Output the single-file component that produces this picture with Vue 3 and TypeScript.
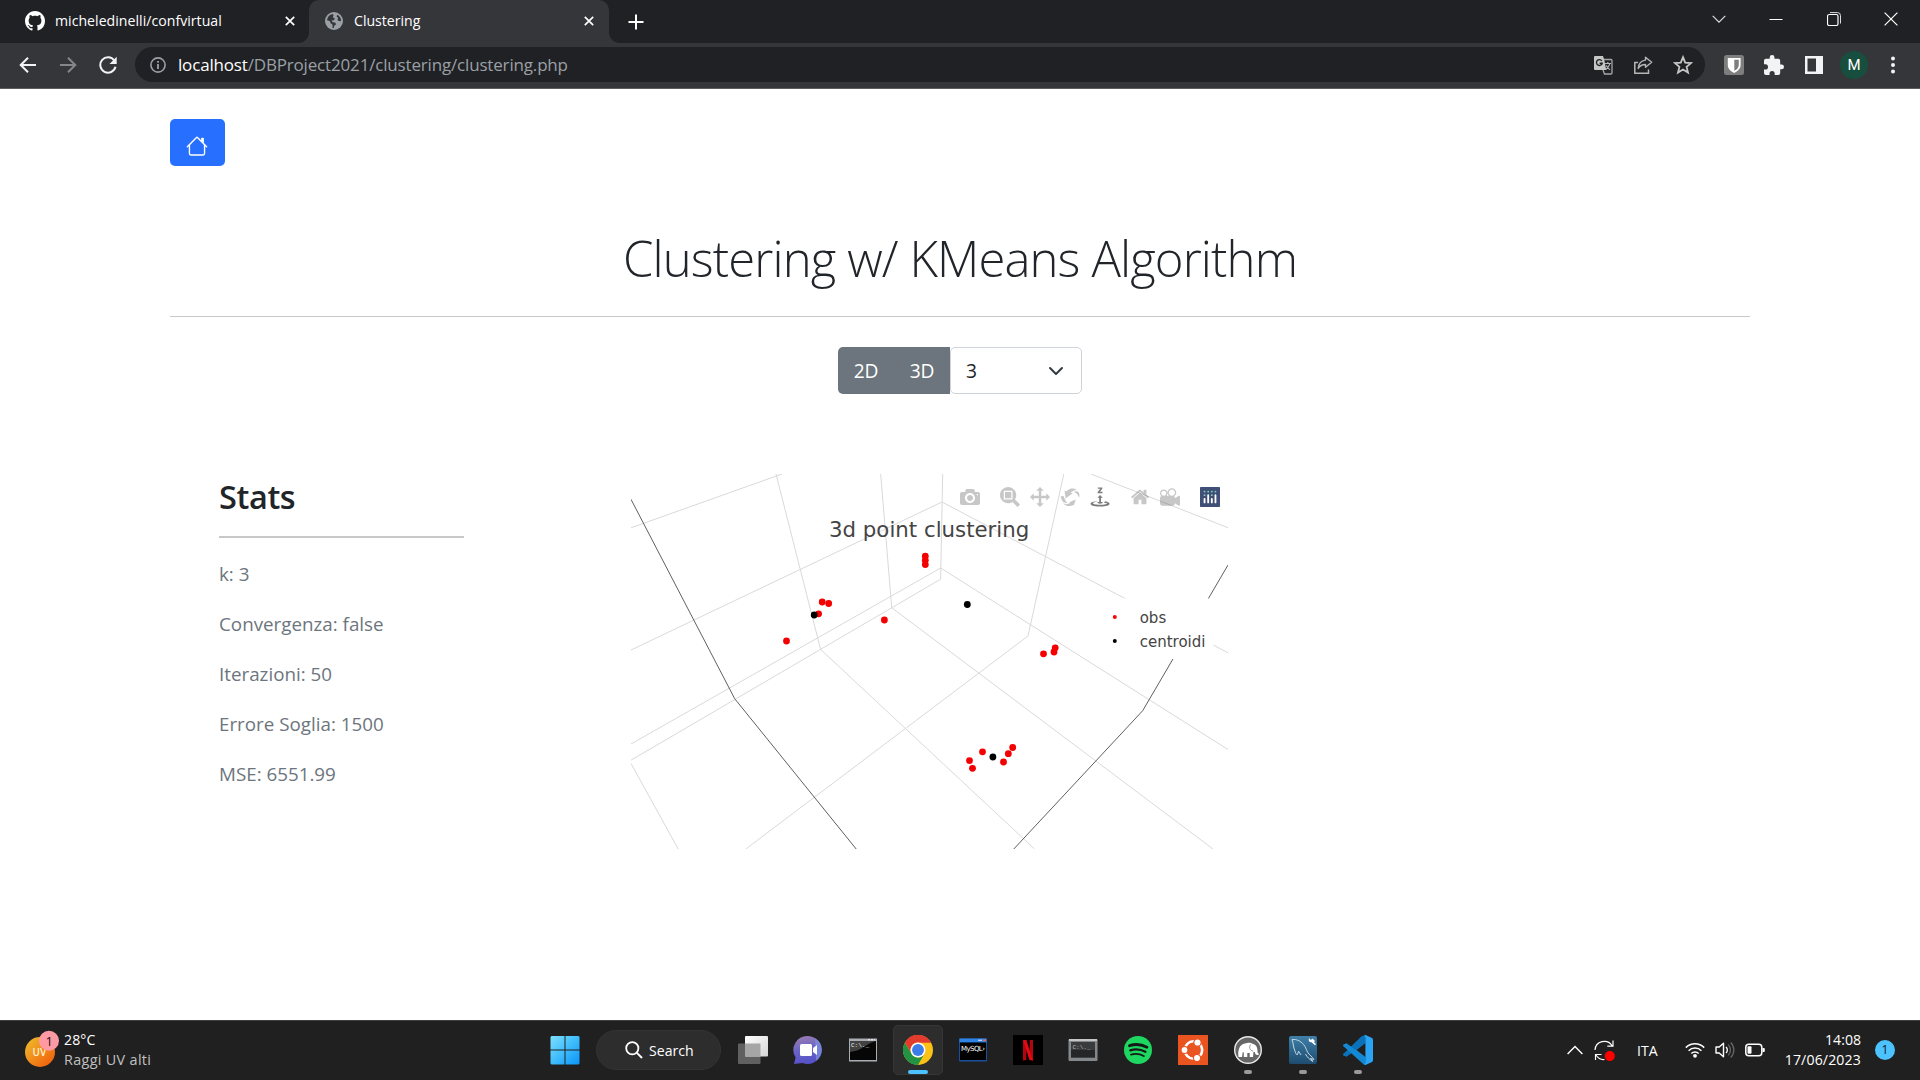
<script setup lang="ts">
interface Segment {
  x1: number
  y1: number
  x2: number
  y2: number
}

const stats: { label: string; value: string }[] = [
  { label: 'k', value: '3' },
  { label: 'Convergenza', value: 'false' },
  { label: 'Iterazioni', value: '50' },
  { label: 'Errore Soglia', value: '1500' },
  { label: 'MSE', value: '6551.99' },
]

const seg = (x1: number, y1: number, x2: number, y2: number): Segment => ({ x1, y1, x2, y2 })

const grid: Segment[] = [
  seg(631, 527.8, 782, 474),
  seg(631, 650, 942, 502),
  seg(631, 744, 940.7, 568),
  seg(631, 760.2, 940.6, 579.2),
  seg(776, 474, 820.6, 649.4),
  seg(880.7, 474, 891.7, 607.7),
  seg(891.7, 607.7, 1213, 849),
  seg(820.6, 649.4, 1034.6, 849),
  seg(631, 763.5, 678.2, 849),
  seg(745.8, 849, 1028, 636),
  seg(1028, 636, 1063.8, 474),
  seg(942.7, 474, 940.6, 579.2),
  seg(942, 502, 1228, 652.8),
  seg(940.7, 568, 1228, 749.5),
  seg(1091, 474, 1228, 527.7),
]

const axes: Segment[] = [
  seg(631, 499.3, 734.7, 698.7),
  seg(734.7, 698.7, 856.2, 849),
  seg(1228, 565, 1142.7, 710.7),
  seg(1142.7, 710.7, 1013.8, 849),
]

const observations: [number, number][] = [
  [925.3, 556.2], [925.3, 560.3], [925.3, 564.6],
  [822.2, 602], [828.7, 603.5], [818.6, 613.8],
  [884.4, 620], [786.5, 641],
  [1055.2, 647.8], [1054, 652], [1043.5, 653.8],
  [1012.7, 747.5], [1008.3, 753.7], [1003.5, 762],
  [982.5, 751.8], [969.5, 760.7], [972.5, 768.3],
]

const centroids: [number, number][] = [
  [967.3, 604.5], [814.2, 615], [992.9, 757],
]
</script>

<template>
  <div class="screen">
    <header class="tabs">
      <div class="tab">
        <svg class="fav" viewBox="0 0 16 16" width="20" height="20"><path fill="#fff" d="M8 0C3.58 0 0 3.58 0 8c0 3.54 2.29 6.53 5.47 7.59.4.07.55-.17.55-.38 0-.19-.01-.82-.01-1.49-2.01.37-2.53-.49-2.69-.94-.09-.23-.48-.94-.82-1.13-.28-.15-.68-.52-.01-.53.63-.01 1.08.58 1.23.82.72 1.21 1.87.87 2.33.66.07-.52.28-.87.51-1.07-1.78-.2-3.64-.89-3.64-3.95 0-.87.31-1.59.82-2.15-.08-.2-.36-1.02.08-2.12 0 0 .67-.21 2.2.82.64-.18 1.32-.27 2-.27s1.36.09 2 .27c1.53-1.04 2.2-.82 2.2-.82.44 1.1.16 1.92.08 2.12.51.56.82 1.27.82 2.15 0 3.07-1.87 3.75-3.65 3.95.29.25.54.73.54 1.48 0 1.07-.01 1.93-.01 2.2 0 .21.15.46.55.38A8.01 8.01 0 0 0 16 8c0-4.42-3.58-8-8-8z" /></svg>
        <span class="tab-title t1">micheledinelli/confvirtual</span>
        <svg class="x" viewBox="0 0 10 10" width="10" height="10"><path d="M.8.8l8.4 8.4M9.2.8L.8 9.2" stroke="#fff" stroke-width="1.7" /></svg>
      </div>
      <div class="tab active">
        <svg class="fav" viewBox="0 0 18 18" width="18" height="18"><circle cx="9" cy="9" r="9" fill="#9aa0a6" /><path fill="#35363a" d="M2 8.3C2.4 5 4.500 2.700 7.600 2.100L8.600 3.300 7.800 5.500 9.800 6.300 9 8.200 6.500 8.500 7.600 10.200 10 10.600 11.200 12.200 9.400 13.600 8.700 16 7.500 15.900 7.600 12.700 5.700 11.300 4.700 8.900zM12.200 2.800C14.600 4 16 6.100 16.100 8.800L14.300 9.300 12.400 8 13.200 6 11.600 4.600z" /></svg>
        <span class="tab-title t2">Clustering</span>
        <svg class="x" viewBox="0 0 10 10" width="10" height="10"><path d="M.8.8l8.4 8.4M9.2.8L.8 9.2" stroke="#fff" stroke-width="1.7" /></svg>
      </div>
      <svg class="plus" viewBox="0 0 16 16" width="16" height="16"><path d="M8 .5v15M.5 8h15" stroke="#fff" stroke-width="2" /></svg>
      <div class="win">
        <svg viewBox="0 0 14 14" width="14" height="14"><path d="M.7 3.800L7 10.200 13.300 3.800" fill="none" stroke="#ddd" stroke-width="1.2" /></svg>
        <svg viewBox="0 0 14 14" width="14" height="14"><path d="M.5 7.500h13" stroke="#fff" /></svg>
        <svg viewBox="0 0 14 14" width="14" height="14"><rect x=".5" y="2.500" width="10.500" height="11" rx="1.800" fill="none" stroke="#fff" stroke-width="1.200" /><path d="M3 .6h7.500a3 3 0 0 1 3 3V11.500" fill="none" stroke="#ddd" /></svg>
        <svg viewBox="0 0 14 14" width="14" height="14"><path d="M.6.6l12.800 12.800M13.400.6L.6 13.400" stroke="#fff" stroke-width="1.200" /></svg>
      </div>
    </header>

    <div class="toolbar">
      <svg class="back" viewBox="0 0 18 18" width="18" height="18"><path d="M17 9H2M9 1.700L1.700 9 9 16.300" fill="none" stroke="#f1f3f4" stroke-width="2" /></svg>
      <svg class="fwd" viewBox="0 0 18 18" width="18" height="18"><path d="M1 9h15M9 1.700L16.300 9 9 16.300" fill="none" stroke="#85868a" stroke-width="2" /></svg>
      <svg class="reload" viewBox="0 0 18 18" width="18" height="18"><path d="M15.300 4.500A7.700 7.700 0 1 0 16.500 10.800" fill="none" stroke="#f1f3f4" stroke-width="2" /><path d="M17.700 .8v7.200h-7.200z" fill="#f1f3f4" /></svg>
      <div class="omnibox">
        <svg viewBox="0 0 16 16" width="16" height="16"><circle cx="8" cy="8" r="7.100" fill="none" stroke="#9aa0a6" stroke-width="1.600" /><path d="M8 7v5M8 4v1.700" stroke="#9aa0a6" stroke-width="1.800" /></svg>
        <span class="url"><b>localhost</b>/DBProject2021/clustering/clustering.php</span>
        <div class="acts">
          <svg viewBox="0 0 20 20" width="20" height="20"><path d="M2 1h8l1.200 3.500 2 10.500H2a1 1 0 0 1-1-1V2a1 1 0 0 1 1-1z" fill="#c4c7c5" /><path d="M11 4.500h7a1 1 0 0 1 1 1V18a1 1 0 0 1-1 1h-6.500L10 15" fill="none" stroke="#a5a7a7" stroke-width="1.300" /><path d="M8.800 5.900A2.900 2.900 0 1 0 9.200 8.300H6.600" fill="none" stroke="#202124" stroke-width="1.400" /><path d="M12 8.500h6M14.800 7v1.500M16.800 8.500c-.5 3-2 4.500-4 6M13.300 10.500c1 2 2.200 3.300 3.700 4.300" fill="none" stroke="#b5b7b7" stroke-width="1.200" /></svg>
          <svg viewBox="0 0 20 20" width="20" height="20"><path d="M5 7.500H1.800V18.200H15.500V14.500" fill="none" stroke="#b5b7b7" stroke-width="1.500" /><path d="M12.500 2.200L18.700 7.300 12.500 12.300V9.500C9 9.500 6.800 10.800 5.200 13.500 5.500 9 8 5.700 12.500 5.100z" fill="none" stroke="#b5b7b7" stroke-width="1.400" stroke-linejoin="round" /></svg>
          <svg viewBox="0 0 20 20" width="20" height="20"><path d="M10 2.200L12.200 7.600 18 8.100 13.600 11.900 15 17.600 10 14.500 5 17.600 6.400 11.900 2 8.100 7.800 7.600z" fill="none" stroke="#c4c7c5" stroke-width="1.800" /></svg>
        </div>
      </div>
      <div class="exts">
        <svg viewBox="0 0 20 20" width="20" height="20"><rect width="20" height="20" rx="2.500" fill="#7e7e7e" /><path d="M3.800 3h12.800v7c0 4-3 6.300-6.400 8-3.400-1.700-6.400-4-6.400-8z" fill="#fff" /><path d="M10.300 4.800h4.500V10c0 2.700-2 4.400-4.500 5.800z" fill="#7e7e7e" /></svg>
        <svg viewBox="2 1 21 21" width="20" height="20"><path d="M20.500 11H19V7a2 2 0 0 0-2-2h-4V3.500a2.500 2.500 0 0 0-5 0V5H4a2 2 0 0 0-2 2v3.800h1.500a2.700 2.700 0 0 1 0 5.400H2V20a2 2 0 0 0 2 2h3.800v-1.500a2.700 2.700 0 0 1 5.400 0V22H17a2 2 0 0 0 2-2v-4h1.500a2.500 2.500 0 0 0 0-5z" fill="#f1f3f4" /></svg>
        <svg viewBox="0 0 20 20" width="20" height="20"><path fill-rule="evenodd" d="M1 1h18v18H1zM3.500 3.500v13h8.500v-13z" fill="#f1f3f4" /></svg>
        <span class="avatar">M</span>
        <svg class="dots" viewBox="0 0 4 18" width="4" height="18"><circle cx="2" cy="2.500" r="2" fill="#f1f3f4" /><circle cx="2" cy="9" r="2" fill="#f1f3f4" /><circle cx="2" cy="15.500" r="2" fill="#f1f3f4" /></svg>
      </div>
    </div>

    <main class="page">
      <button class="home">
        <svg viewBox="0 0 16 16" width="22" height="22" fill="#fff"><path fill-rule="evenodd" d="M2 13.500V7h1v6.500a.5.5 0 0 0 .5.5h9a.5.5 0 0 0 .5-.5V7h1v6.500a1.500 1.500 0 0 1-1.500 1.500h-9A1.500 1.500 0 0 1 2 13.500zm11-11V6l-2-2V2.500a.5.5 0 0 1 .5-.5h1a.5.5 0 0 1 .5.5z" /><path fill-rule="evenodd" d="M7.293 1.500a1 1 0 0 1 1.414 0l6.647 6.646a.5.5 0 0 1-.708.708L8 2.207 1.354 8.854a.5.5 0 1 1-.708-.708L7.293 1.500z" /></svg>
      </button>
      <h1>Clustering w/ KMeans Algorithm</h1>
      <hr />
      <div class="controls">
        <button class="mode">2D</button>
        <button class="mode">3D</button>
        <div class="select">
          <span>3</span>
          <svg viewBox="0 0 16 16" width="16" height="16"><path d="M2 5l6 6 6-6" fill="none" stroke="#343a40" stroke-width="2" stroke-linecap="round" stroke-linejoin="round" /></svg>
        </div>
      </div>

      <div class="row">
        <section class="stats">
          <h2>Stats</h2>
          <div class="rule"></div>
          <p v-for="s in stats" :key="s.label">{{ s.label }}: {{ s.value }}</p>
        </section>

        <svg class="plot" viewBox="631 474 597 375" width="597" height="375">
          <line v-for="(l, i) in grid" :key="'g' + i" v-bind="l" stroke="#d9d9d9" stroke-width="1" />
          <line v-for="(l, i) in axes" :key="'a' + i" v-bind="l" stroke="#606060" stroke-width="1" />
          <circle v-for="(p, i) in observations" :key="'o' + i" :cx="p[0]" :cy="p[1]" r="3.4" fill="#f40000" />
          <circle v-for="(p, i) in centroids" :key="'c' + i" :cx="p[0]" :cy="p[1]" r="3.4" fill="#000" />
          <rect x="1101" y="598.500" width="112.500" height="60.500" fill="#fff" />
          <circle cx="1114.800" cy="617" r="2" fill="#f00" />
          <circle cx="1114.800" cy="641" r="2" fill="#000" />
          <text x="1139.700" y="622.500" class="legend">obs</text>
          <text x="1139.700" y="646.500" class="legend">centroidi</text>
          <text x="829" y="537" class="title">3d point clustering</text>
          <g fill="#444" fill-opacity=".3">
            <svg x="960" y="487" width="20" height="20" viewBox="0 0 1000 1000"><path transform="matrix(1 0 0 -1 0 850)" d="m500 450c-83 0-150-67-150-150 0-83 67-150 150-150 83 0 150 67 150 150 0 83-67 150-150 150z m400 150h-120c-16 0-34 13-39 29l-31 93c-6 15-23 28-40 28h-340c-16 0-34-13-39-28l-31-94c-6-15-23-28-40-28h-120c-55 0-100-45-100-100v-450c0-55 45-100 100-100h800c55 0 100 45 100 100v450c0 55-45 100-100 100z m-400-550c-138 0-250 112-250 250 0 138 112 250 250 250 138 0 250-112 250-250 0-138-112-250-250-250z m365 380c-19 0-35 16-35 35 0 19 16 35 35 35 19 0 35-16 35-35 0-19-16-35-35-35z" /></svg>
            <svg x="1000" y="487" width="20" height="20" viewBox="0 0 1000 1000"><path transform="matrix(1 0 0 -1 0 850)" d="m1000-25l-250 251c40 63 63 138 63 218 0 224-182 406-407 406-224 0-406-182-406-406s183-406 407-406c80 0 155 22 218 62l250-250 125 125z m-812 250l0 438 437 0 0-438-437 0z m62 375l313 0 0-312-313 0 0 312z" /></svg>
            <svg x="1030" y="487" width="20" height="20" viewBox="0 0 1000 1000"><path transform="matrix(1 0 0 -1 0 850)" d="m1000 350l-187 188 0-125-250 0 0 250 125 0-188 187-187-187 125 0 0-250-250 0 0 125-188-188 186-187 0 125 252 0 0-250-125 0 187-188 188 188-125 0 0 250 250 0 0-126 187 188z" /></svg>
            <svg x="1060" y="487" width="20" height="20" viewBox="0 0 1000 1000"><path transform="matrix(1 0 0 -1 0 850)" d="m922 660c-5 4-9 7-14 11-359 263-580-31-580-31l-102 28 58-400c0 1 1 1 2 2 118 108 351 249 351 249s-62 27-100 42c88 83 222 183 347 122 16-8 30-17 44-27-2 1-4 2-6 4z m36-329c0 0 64 229-88 296-62 27-124 14-175-11 157-78 225-208 249-266 8-19 11-31 11-31 2 5 6 15 11 32-5-13-8-20-8-20z m-775-239c70-31 117-50 198-32-121 80-199 346-199 346l-96-15-58-12c0 0 55-226 155-287z m603 133l-317-139c0 0 4-4 19-14 7-5 24-15 24-15s-177-147-389 4c235-287 536-112 536-112l31-22 100 299-4-1z m-298-153c6-4 14-9 24-15 0 0-17 10-24 15z" /></svg>
            <svg x="1090" y="487" width="20" height="20" viewBox="0 0 1000 1000" fill-opacity=".7"><path transform="matrix(1 0 0 -1 0 850)" d="m833 5l-17 108v41l-130-65 130-66c0 0 0 38 0 39 0-1 36-14 39-25 4-15-6-22-16-30-15-12-39-16-56-20-90-22-187-23-279-23-261 0-341 34-353 59 3 60 228 110 228 110-140-8-351-35-351-116 0-120 293-142 474-142 155 0 477 22 477 142 0 50-74 79-163 96z m-374 94c-58-5-99-21-99-40 0-24 65-43 144-43 79 0 143 19 143 43 0 19-42 34-98 40v216h87l-132 135-133-135h88v-216z m167 515h-136v1c16 16 31 34 46 52l84 109v54h-230v-71h124v-1c-16-17-28-32-44-51l-89-114v-51h245v72z" /></svg>
            <svg x="1130.500" y="487" width="19" height="20" viewBox="0 0 928.6 1000"><path transform="matrix(1 0 0 -1 0 850)" d="m786 296v-267q0-15-11-26t-25-10h-214v214h-143v-214h-214q-15 0-25 10t-11 26v267q0 1 0 2t0 2l321 264 321-264q1-1 1-4z m124 39l-34-41q-5-5-12-6h-2q-7 0-12 3l-386 322-386-322q-7-4-13-4-7 2-12 7l-35 41q-4 5-3 13t6 12l401 334q18 15 42 15t43-15l136-114v109q0 8 5 13t13 5h107q8 0 13-5t5-13v-227l122-102q5-5 6-12t-4-13z" /></svg>
            <svg x="1160" y="487" width="20" height="20" viewBox="0 0 1000 1000"><path transform="matrix(1 0 0 -1 0 850)" d="m938 413l-188-125c0 37-17 71-44 94 64 38 107 107 107 187 0 121-98 219-219 219-121 0-219-98-219-219 0-61 25-117 66-156h-115c30 33 49 76 49 125 0 103-84 187-187 187s-188-84-188-187c0-57 26-107 65-141-38-22-65-62-65-109v-250c0-70 56-126 125-126h500c69 0 125 56 125 126l188-126c34 0 62 28 62 63v375c0 35-28 63-62 63z m-750 0c-69 0-125 56-125 125s56 125 125 125 125-56 125-125-56-125-125-125z m406-1c-87 0-157 70-157 157 0 86 70 156 157 156s156-70 156-156-70-157-156-157z" /></svg>
          </g>
          <svg x="1200" y="487" width="20" height="20" viewBox="0 0 132 132">
            <rect width="132" height="132" rx="5" fill="#3f4f75" />
            <g fill="#80cfbe"><circle cx="30" cy="30" r="6" /><circle cx="54" cy="30" r="6" /><circle cx="78" cy="30" r="6" /><circle cx="102" cy="30" r="6" /><circle cx="30" cy="54" r="6" /><circle cx="78" cy="54" r="6" /></g>
            <path d="M30 78v24M78 78v24M54 54v48M102 54v48" stroke="#fff" stroke-width="12" stroke-linecap="round" />
          </svg>
        </svg>
      </div>
    </main>

    <footer class="taskbar">
      <div class="weather">
        <svg viewBox="0 0 36 40" width="36" height="40">
          <defs><linearGradient id="uv" x1="0" y1="0" x2="1" y2="1"><stop offset="0" stop-color="#f0c02c" /><stop offset="1" stop-color="#f0560a" /></linearGradient></defs>
          <circle cx="15" cy="22" r="15" fill="url(#uv)" />
          <text x="7.500" y="25.500" class="uv">UV</text>
          <circle cx="24" cy="10.700" r="10" fill="#ff99a4" />
          <text x="20.500" y="16" class="one">1</text>
        </svg>
        <div class="wtext"><span class="temp">28°C</span><span class="desc">Raggi UV alti</span></div>
      </div>
      <div class="cell">
        <svg viewBox="0 0 30 30" width="30" height="30">
          <defs><linearGradient id="ws" x1="0" y1="0" x2="1" y2="1" gradientUnits="objectBoundingBox"><stop offset="0" stop-color="#7fdfff" /><stop offset=".5" stop-color="#3fbdfb" /><stop offset="1" stop-color="#0a94f8" /></linearGradient></defs>
          <path d="M1.500 1H14.500V14.500H.5V2zM15.500 1H28.500L29.500 2V14.500H15.500zM.5 15.500H14.500V29.500H1.500L.5 28.500zM15.500 15.500H29.500V28.500L28.500 29.500H15.500z" fill="url(#ws)" />
        </svg>
      </div>
      <div class="search">
        <svg viewBox="0 0 18 18" width="18" height="18"><circle cx="7.300" cy="7.300" r="6.100" fill="none" stroke="#fff" stroke-width="1.800" /><path d="M11.700 11.700L17 17" stroke="#fff" stroke-width="1.900" /></svg>
        <span>Search</span>
      </div>
      <div class="apps">
        <div class="cell">
          <svg viewBox="0 0 30 30" width="30" height="30"><defs><linearGradient id="tv" x2="1" y2="1"><stop offset="0" stop-color="#fff" /><stop offset="1" stop-color="#d5d5d5" /></linearGradient></defs><rect x="0" y="8.500" width="22.500" height="20.500" rx="1" fill="#606060" /><rect x="7" y="1" width="23" height="20.500" rx="1" fill="url(#tv)" /><path d="M7 8.500h15.500v13H7z" fill="#a6a6a6" /></svg>
        </div>
        <div class="cell">
          <svg viewBox="0 0 30 30" width="30" height="30"><defs><linearGradient id="ch" x1=".2" y1="0" x2=".4" y2="1"><stop offset="0" stop-color="#9d7cb3" /><stop offset=".5" stop-color="#6a64c4" /><stop offset="1" stop-color="#5551c8" /></linearGradient></defs><path d="M15 1a14 14 0 1 1-5.500 27L1 29l1.600-6.500A14 14 0 0 1 15 1z" fill="url(#ch)" /><path d="M22 3a14 14 0 0 1 7 12 14 14 0 0 1-6 11z" fill="#7f93e6" opacity=".65" /><rect x="7" y="9" width="12" height="12" rx="1.500" fill="#fff" /><path d="M20 13l4-3v10l-4-3z" fill="#fff" /></svg>
        </div>
        <div class="cell">
          <svg viewBox="0 0 30 30" width="30" height="30"><rect x="1" y="3.500" width="28" height="23" fill="#aaaeb2" /><rect x="2" y="6" width="26" height="19" fill="#060606" /><path d="M2 6h26C20 8 14 14 9 15.500L2 17z" fill="#424242" /><path d="M20 4.800h7" stroke="#fff" stroke-dasharray="2 1" /><text x="3" y="12" class="prompt">C:\._</text></svg>
        </div>
        <div class="cell on">
          <svg viewBox="0 0 48 48" width="30" height="30"><circle cx="24" cy="24" r="24" fill="#fbc116" /><path d="M3.200 12A24 24 0 0 1 44.800 12H24z" fill="#e33b2e" /><path d="M3.200 12A24 24 0 0 0 24 48L34.400 30A12 12 0 0 1 13.600 30z" fill="#229342" /><path d="M3.200 12A24 24 0 0 1 24 0 24 24 0 0 1 44.800 12H24A12 12 0 0 0 13.600 30z" fill="#e33b2e" /><circle cx="24" cy="24" r="12" fill="#fff" /><circle cx="24" cy="24" r="9.500" fill="#3b7de9" /></svg>
          <i class="wide"></i>
        </div>
        <div class="cell">
          <svg viewBox="0 0 30 30" width="30" height="30"><rect x="1" y="3.500" width="28" height="23" rx="1" fill="#1b4f9d" /><rect x="1.500" y="3.500" width="27" height="4" fill="#2f83e6" /><path d="M20 5.300h4" stroke="#bcd8ff" stroke-width="1.300" /><path d="M25 5.300h3" stroke="#e06a58" stroke-width="1.800" /><rect x="2" y="7.500" width="26" height="17.500" fill="#000" /><text x="3" y="15.500" class="mysql" textLength="24">MySQL›</text></svg>
        </div>
        <div class="cell">
          <svg viewBox="0 0 30 30" width="30" height="30"><rect width="30" height="30" fill="#000" /><path d="M10 5h3.300v20l-3.300.5zM16.700 5H20v20.500l-3.300-.5z" fill="#b1060f" /><path d="M10 5h3.300L20 25.500l-3.500-.5z" fill="#e50914" /></svg>
        </div>
        <div class="cell">
          <svg viewBox="0 0 30 30" width="30" height="30"><rect x=".5" y="4" width="29" height="22" rx="1" fill="#85888a" /><rect x="1" y="4" width="28" height="2" fill="#c3c5c6" /><rect x="3" y="7" width="24" height="15.500" fill="#3a3b3c" /><path d="M3 15h24v7.500H3z" fill="#252627" /><text x="4.500" y="13.500" class="prompt dim">C:\._</text></svg>
        </div>
        <div class="cell">
          <svg viewBox="0 0 30 30" width="30" height="30"><circle cx="15" cy="15" r="14" fill="#1ed760" /><g fill="none" stroke="#161a17" stroke-linecap="round"><path d="M6.500 10.700C12 8.900 19 9.500 24 12.200" stroke-width="2.800" /><path d="M7.300 15.300C12 13.800 18 14.300 22.400 16.800" stroke-width="2.300" /><path d="M8 19.600C12.300 18.400 16.900 18.800 20.800 21" stroke-width="1.900" /></g></svg>
        </div>
        <div class="cell">
          <svg viewBox="0 0 30 30" width="30" height="30"><rect width="30" height="30" fill="#e95420" /><circle cx="15.500" cy="15" r="8.700" fill="none" stroke="#fff" stroke-width="2.600" /><g fill="#fff" stroke="#e95420" stroke-width="1.200"><circle cx="6.500" cy="15" r="3.500" /><circle cx="19.500" cy="7.500" r="3.700" /><circle cx="19" cy="23" r="3.600" /></g></svg>
        </div>
        <div class="cell">
          <svg viewBox="0 0 30 30" width="30" height="30"><circle cx="15" cy="15" r="13.300" fill="#666" stroke="#e8e8e8" stroke-width="1.400" /><path d="M5.500 22C4.500 15 6.500 9.500 12 8.500c2.500-1.200 6-1 8 .5 3.300.7 4.500 3.500 4.500 7 0 2 .6 2.700 1.600 2.500-.5 2.500-4.300 2-4.300-1.500l-1.300-.3-.5 5.300h-3.300v-4h-2.400v4h-3.500v-4.500l-1-.5-.8 5z" fill="#fff" /><path d="M17.500 9.500c-1.700 3-.7 6 2.500 6.500" fill="none" stroke="#888" stroke-width=".9" /></svg>
          <i></i>
        </div>
        <div class="cell">
          <svg viewBox="0 0 30 30" width="30" height="30"><defs><linearGradient id="wb" x2="0" y2="1"><stop offset="0" stop-color="#3f7fa8" /><stop offset="1" stop-color="#1e4c70" /></linearGradient></defs><rect x="1" y="1" width="28" height="28" rx="2" fill="url(#wb)" /><path d="M4 4.500C9 4 14 6.500 17 11.500c2 4 2.500 7 6 9.500l3 3.500-3.500-1 2.500 3c-3.500-2-6-4.500-7.500-7.500M4 4.500C5.500 8 5 12 7 16c.5 2.500 1.500 4 2.500 3.500l1-3.300L13 20" fill="none" stroke="#d5e2ea" stroke-width=".9" /><path d="M21 3l1.800 2 1.700-1.500L27 6l-1 1.300 2 1.700-1 1.300-3.500-3c-2 .3-3.300-1.500-2.500-4.300z" fill="#fff" /></svg>
          <i></i>
        </div>
        <div class="cell">
          <svg viewBox="0 0 100 100" width="30" height="30"><path d="M75 0L30 42 12 28 3 31 0 36 18 50 0 64 3 69 12 72 30 58 75 100z" fill="#0f83cd" /><path d="M30 58L12 72 3 69 0 64 62 4 75 0V27z" fill="#0a72bb" /><path d="M0 36L3 31 12 28 75 73V100L69 98z" fill="#1389d6" /><path d="M75 27L45 50 75 73z" fill="#202020" /><path d="M75 0L97 10 100 15V85L97 90 75 100 71 98 75 92V8L71 2z" fill="#2aa4f4" /></svg>
          <i></i>
        </div>
      </div>
      <div class="tray">
        <svg class="chev" viewBox="0 0 16 10" width="16" height="10"><path d="M.6 9L8 1.500 15.400 9" fill="none" stroke="#fff" stroke-width="1.400" /></svg>
        <svg class="sync" viewBox="0 0 21 21" width="21" height="21"><path d="M1 10A9.300 9.300 0 0 1 18 5.500M19 .5V6.200H13.300M1.500 20V14.500H7.500M2 15C4 18 7 20 10.500 19.500" fill="none" stroke="#fff" stroke-width="1.200" /><circle cx="15.800" cy="16" r="5.100" fill="#f00" /></svg>
        <span class="lang">ITA</span>
        <svg class="wifi" viewBox="0 0 20 20" width="20" height="20"><g fill="none" stroke="#fff" stroke-width="1.500"><path d="M.8 7.600a13 13 0 0 1 18.400 0M3.600 10.700a9 9 0 0 1 12.800 0M6.300 13.500a5.200 5.200 0 0 1 7.400 0" /></g><circle cx="10" cy="15.800" r="1.900" fill="#fff" /></svg>
        <svg class="vol" viewBox="0 0 20 20" width="20" height="20"><path d="M1 7h3.200L8.500 3.200v13.600L4.200 13H1z" fill="none" stroke="#fff" stroke-width="1.400" stroke-linejoin="round" /><path d="M11 7a4 4 0 0 1 0 6" fill="none" stroke="#fff" stroke-width="1.300" /><path d="M13.200 4.600a7.500 7.500 0 0 1 0 10.800M15.700 2.500a10.500 10.500 0 0 1 0 15" fill="none" stroke="#666" stroke-width="1.300" /></svg>
        <svg class="bat" viewBox="0 0 20 20" width="20" height="20"><rect x=".8" y="4.300" width="16" height="11.500" rx="3" fill="none" stroke="#fff" stroke-width="1.500" /><rect x="2.500" y="6.300" width="4" height="7.500" rx="1" fill="#fff" /><path d="M17.500 8h1.300a1 1 0 0 1 1 1v2a1 1 0 0 1-1 1h-1.300z" fill="#fff" /></svg>
        <div class="clock"><span class="time">14:08</span><span class="date">17/06/2023</span></div>
        <span class="badge">1</span>
      </div>
    </footer>
  </div>
</template>

<style>
body {
  margin: 0;
  background: #fff;
}
</style>

<style scoped>
.screen {
  width: 1920px;
  height: 1080px;
  display: flex;
  flex-direction: column;
  overflow: hidden;
  font-family: "Open Sans", "Noto Sans", sans-serif;
  color: #212529;
  background: #fff;
}
.screen * {
  box-sizing: border-box;
}
svg {
  flex: none;
  display: block;
}
button {
  font-family: inherit;
  border: 0;
  padding: 0;
}
span {
  white-space: nowrap;
}

/* browser chrome */
.tabs {
  height: 43px;
  flex: none;
  background: #202124;
  display: flex;
  align-items: center;
}
.tab {
  width: 309px;
  height: 43px;
  padding: 0 14px 1px 25px;
  display: flex;
  align-items: center;
}
.tab.active {
  width: 300px;
  padding: 0 15px 1px 16px;
  background: #35363a;
  border-radius: 10px 10px 0 0;
  position: relative;
}
.tab.active::before,
.tab.active::after {
  content: "";
  position: absolute;
  bottom: 0;
  width: 10px;
  height: 10px;
}
.tab.active::before {
  left: -10px;
  background: radial-gradient(circle at 0 0, transparent 9.5px, #35363a 10px);
}
.tab.active::after {
  right: -10px;
  background: radial-gradient(circle at 100% 0, transparent 9.5px, #35363a 10px);
}
.tab-title {
  margin-left: 11px;
  padding-bottom: 1px;
  font-size: 14.1px;
  color: #fff;
}
.t1 {
  margin-left: 10px;
  letter-spacing: 0.03px;
}
.tab .x {
  margin-left: auto;
}
.plus {
  margin-left: 19px;
}
.win {
  margin: -6px 22px 0 auto;
  display: flex;
  gap: 43.5px;
}
.toolbar {
  height: 46px;
  flex: none;
  background: #35363a;
  border-bottom: 1px solid #5c5d60;
  display: flex;
  align-items: center;
  padding: 0 25px 2px 19px;
}
.fwd {
  margin-left: 22px;
}
.reload {
  margin-left: 22px;
}
.omnibox {
  width: 1570px;
  height: 35px;
  margin-left: 18px;
  border-radius: 18px;
  background: #202124;
  display: flex;
  align-items: center;
  padding: 0 12px 0 15px;
}
.url {
  margin-left: 12px;
  font-size: 17px;
  letter-spacing: -0.17px;
  color: #9aa0a6;
}
.url b {
  font-weight: 400;
  color: #fff;
}
.acts {
  margin-left: auto;
  display: flex;
  gap: 20px;
}
.exts {
  margin-left: auto;
  display: flex;
  align-items: center;
  gap: 20px;
}
.avatar {
  width: 28px;
  height: 28px;
  border-radius: 50%;
  background: #174e3e;
  color: #fff;
  font: 15px/28px Roboto, sans-serif;
  text-align: center;
  margin: 0 3px 0 -4px;
}

/* page */
.page {
  height: 931px;
  flex: none;
  padding: 30px 170px 0;
}
.home {
  width: 55px;
  height: 47px;
  border-radius: 5px;
  background: #2770ff;
  display: flex;
  align-items: center;
  justify-content: center;
  padding: 6px 1px 0 0;
}
h1 {
  margin: 59px 0 0;
  height: 66px;
  line-height: 66px;
  font-size: 49px;
  letter-spacing: -0.87px;
  font-weight: 300;
  text-align: center;
  white-space: nowrap;
}
hr {
  margin: 25px 0 0;
  border: 0;
  height: 1px;
  background: #c8c9ca;
}
.controls {
  margin-top: 30px;
  display: flex;
  justify-content: center;
}
.mode {
  width: 56px;
  height: 47px;
  background: #6c757d;
  color: #fff;
  font-size: 19.2px;
  letter-spacing: -0.1px;
}
.mode:first-child {
  border-radius: 5px 0 0 5px;
}
.select {
  width: 132px;
  height: 47px;
  border: 1px solid #ced4da;
  border-radius: 5px;
  padding: 0 17px 0 15px;
  display: flex;
  align-items: center;
  justify-content: space-between;
  font-size: 19.2px;
}
.row {
  margin-top: 80px;
  display: flex;
}
.stats {
  width: 461px;
  padding: 0 167px 0 49px;
}
h2 {
  margin: 0;
  height: 46px;
  line-height: 45px;
  font-size: 32.5px;
  letter-spacing: -0.4px;
  font-weight: 600;
}
.rule {
  height: 2px;
  margin-top: 16px;
  margin-bottom: 21px;
  background: #c8c8c8;
}
.stats p {
  margin: 0 0 20px;
  height: 30px;
  line-height: 30px;
  font-size: 18.8px;
  color: #6c757d;
  white-space: nowrap;
}
.legend {
  font-family: "DejaVu Sans", Verdana, sans-serif;
  font-size: 15px;
  fill: #444;
}
.title {
  font-family: "DejaVu Sans", Verdana, sans-serif;
  font-size: 21.3px;
  fill: #444;
}

/* taskbar */
.taskbar {
  height: 60px;
  flex: none;
  background: #202020;
  border-top: 1px solid #3c4040;
  padding-bottom: 1px;
  display: flex;
  align-items: center;
  color: #fff;
  font-size: 14.1px;
}
.weather {
  width: 537px;
  padding-left: 25px;
  display: flex;
  align-items: center;
}
.wtext {
  display: flex;
  flex-direction: column;
  margin-left: 3px;
  line-height: 20px;
  padding-bottom: 1px;
}
.temp {
  letter-spacing: 0.1px;
}
.desc {
  color: #c0c0c0;
  font-size: 14.4px;
  letter-spacing: 0.32px;
}
.uv {
  font: 600 10px "Open Sans", sans-serif;
  fill: #fff2d0;
}
.one {
  font: 13px "Open Sans", sans-serif;
  fill: #201014;
}
.prompt {
  font: 6px "Liberation Mono", monospace;
  fill: #eee;
}
.prompt.dim {
  fill: #bbb;
}
.mysql {
  font: 7px "DejaVu Sans", sans-serif;
  fill: #fff;
}
.cell {
  width: 55px;
  height: 50px;
  display: flex;
  align-items: center;
  justify-content: center;
  position: relative;
}
.cell.on::before {
  content: "";
  position: absolute;
  inset: 0 2.5px;
  border: 1px solid #363636;
  border-radius: 5px;
  background: #2d2d2d;
}
.cell svg {
  position: relative;
}
.cell i {
  position: absolute;
  bottom: 1px;
  left: 23.5px;
  width: 8px;
  height: 4px;
  border-radius: 2px;
  background: #9a9a9a;
}
.cell i.wide {
  left: 17.5px;
  width: 20px;
  background: #4cc2ff;
}
.search {
  width: 125px;
  height: 40px;
  margin: 0 4px;
  border-radius: 20px;
  background: #2d2d2d;
  border: 1px solid #333;
  display: flex;
  align-items: center;
  padding-left: 28px;
}
.search span {
  margin-left: 6px;
}
.apps {
  display: flex;
}
.tray {
  margin-left: auto;
  display: flex;
  align-items: center;
  padding-right: 25px;
}
.sync {
  margin-left: 11px;
}
.lang {
  width: 22px;
  margin-left: 22px;
}
.wifi {
  margin-left: 26px;
}
.vol {
  margin-left: 10px;
}
.bat {
  margin-left: 10px;
}
.clock {
  width: 96px;
  display: flex;
  flex-direction: column;
  align-items: flex-end;
  line-height: 20px;
  padding-bottom: 1px;
}
.date {
  letter-spacing: 0.15px;
}
.badge {
  width: 20px;
  height: 20px;
  margin-left: 14px;
  border-radius: 50%;
  background: #4cc2ff;
  color: #10202a;
  font-size: 12px;
  line-height: 20px;
  text-align: center;
}
</style>
